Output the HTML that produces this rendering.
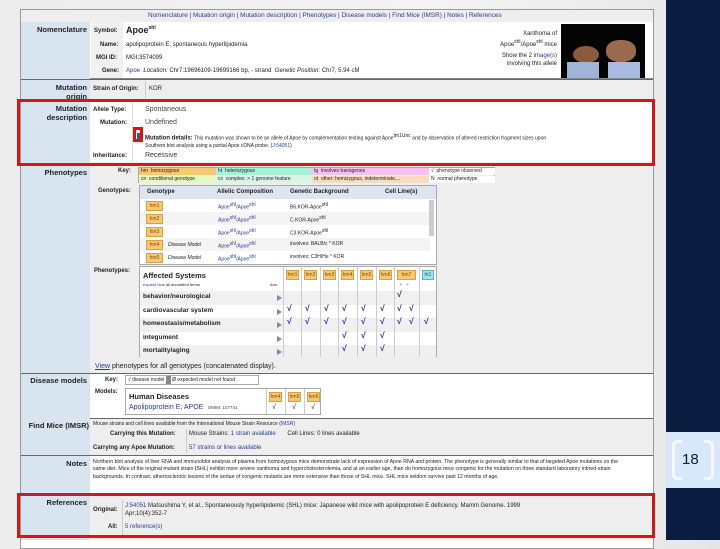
<!DOCTYPE html>
<html><head><meta charset="utf-8"><style>
*{margin:0;padding:0;box-sizing:border-box}
body{width:720px;height:540px;overflow:hidden;position:relative;font-family:"Liberation Sans",sans-serif;background:linear-gradient(90deg,#ececec,#f4f4f4 60%,#e6e6e6);color:#222}
.a{position:absolute;white-space:nowrap}
.lbl{position:absolute;left:21px;width:66px;text-align:right;font-weight:bold;font-size:7.5px;line-height:9px;color:#222}
.f7{font-size:7px}.f6{font-size:6px}.f5{font-size:5px}
.b{font-weight:bold}
.blue{color:#2a3a9a}
.hm{position:absolute;background:#f8c870;border:1px solid #d8a040;font-size:5px;color:#7a4a10;text-align:center;line-height:8px;height:10px}
.ck{position:absolute;color:#2a2aa0;font-size:8.5px;font-weight:bold}
.arr{position:absolute;width:0;height:0;border-left:5px solid #7a8aa8;border-top:3px solid transparent;border-bottom:3px solid transparent}
.rb{position:absolute;border:3px solid #d41818}
sup{font-size:5px}
</style></head><body>
<div class="a" style="left:666px;top:0;width:54px;height:540px;background:#0c1c40"></div>
<div class="a" style="left:666px;top:432px;width:54px;height:56px;background:#d6e8fa"></div>
<div class="a" style="left:672px;top:440px;width:10px;height:40px;border:3px solid #f4f8fc;border-right:none;border-radius:6px 0 0 6px"></div>
<div class="a" style="left:704px;top:440px;width:10px;height:40px;border:3px solid #f4f8fc;border-left:none;border-radius:0 6px 6px 0"></div>
<div class="a" style="left:682px;top:451px;font-size:15px;color:#0c1c40">18</div>

<div class="a" style="left:20px;top:9px;width:634px;height:540px;border:1px solid #999;background:#fff"></div>
<div class="a" style="left:21px;top:10px;width:632px;height:12px;background:#eee"></div>
<div class="a blue" style="left:148px;top:12px;font-size:6.4px">Nomenclature | Mutation origin | Mutation description | Phenotypes | Disease models | Find Mice (IMSR) | Notes | References</div>
<div class="a" style="left:21px;top:22px;width:69px;height:518px;background:#d8e4f0"></div>
<div class="a" style="left:90px;top:79px;width:563px;height:21px;background:#eee;border-top:1px solid #666"></div>
<div class="a" style="left:21px;top:79px;width:69px;height:1px;background:#666"></div>
<div class="a" style="left:90px;top:162px;width:563px;height:211px;background:#eee"></div>
<div class="a" style="left:21px;top:373px;width:632px;height:1px;background:#666"></div>
<div class="a" style="left:90px;top:418px;width:563px;height:37px;background:#eee;border-top:1px solid #666"></div>
<div class="a" style="left:21px;top:455px;width:632px;height:1px;background:#666"></div>
<div class="a" style="left:90px;top:495px;width:563px;height:45px;background:#eee;border-top:1px solid #666"></div>

<div class="lbl" style="top:25px">Nomenclature</div>
<div class="a" style="left:91px;top:22px;width:32px;height:57px;background:#f0f0f0"></div>
<div class="a f6 b" style="left:94px;top:28px">Symbol:</div>
<div class="a b" style="left:126px;top:25px;font-size:9px">Apoe<sup>shl</sup></div>
<div class="a f6 b" style="left:100px;top:42px">Name:</div>
<div class="a f6" style="left:126px;top:42px">apolipoprotein E; spontaneous hyperlipidemia</div>
<div class="a f6 b" style="left:96px;top:55px">MGI ID:</div>
<div class="a f6" style="left:126px;top:55px">MGI:3574099</div>
<div class="a f6 b" style="left:102px;top:68px">Gene:</div>
<div class="a f6" style="left:126px;top:68px"><span class="blue">Apoe</span> &nbsp;<i>Location:</i> Chr7:19696109-19699166 bp, - strand &nbsp;<i>Genetic Position:</i> Chr7, 5.94 cM</div>
<div class="a f6" style="left:480px;top:30px;width:77px;text-align:right;line-height:8px">Xanthoma of<br>Apoe<sup>shl</sup>/Apoe<sup>shl</sup> mice</div>
<div class="a f6" style="left:470px;top:52px;width:87px;text-align:right;line-height:8px">Show the 2 <span class="blue">image(s)</span><br>involving this allele</div>
<div class="a" style="left:561px;top:24px;width:84px;height:54px;background:#050505">
 <div class="a" style="left:12px;top:22px;width:26px;height:17px;background:#8a5a40;border-radius:50%"></div>
 <div class="a" style="left:45px;top:16px;width:30px;height:22px;background:#9a6a50;border-radius:45%"></div>
 <div class="a" style="left:6px;top:38px;width:32px;height:16px;background:#a0b4d8"></div>
 <div class="a" style="left:47px;top:38px;width:32px;height:16px;background:#a8bce0"></div>
</div>
<div class="a" style="left:90px;top:78px;width:563px;height:1px;background:#888"></div>

<div class="lbl" style="top:83px">Mutation<br>origin</div>
<div class="a f6 b" style="left:93px;top:86px">Strain of Origin:</div>
<div class="a" style="left:145px;top:81px;width:1px;height:17px;background:#ccc"></div>
<div class="a f6" style="left:149px;top:86px">KOR</div>

<div class="lbl" style="top:104px">Mutation<br>description</div>
<div class="a" style="left:132px;top:100px;width:1px;height:62px;background:#ddd"></div>
<div class="a f6 b" style="left:93px;top:107px">Allele Type:</div>
<div class="a f6 b" style="left:100px;top:120px">Mutation:</div>
<div class="a f6 b" style="left:93px;top:153px">Inheritance:</div>
<div class="a f7" style="left:145px;top:106px;color:#444">Spontaneous</div>
<div class="a f7" style="left:145px;top:119px;color:#444">Undefined</div>
<div class="a" style="left:137px;top:133px;width:5px;height:6px;background:#556"></div>
<div class="a f5" style="left:145px;top:133px;line-height:7px"><b style="font-size:6px">Mutation details:</b> This mutation was shown to be an allele of Apoe by complementation testing against Apoe<sup>tm1Unc</sup> and by observation of altered restriction fragment sizes upon<br>Southern blot analysis using a partial Apoe cDNA probe. (<span class="blue">J:54051</span>)</div>
<div class="a f7" style="left:145px;top:152px;color:#333">Recessive</div>

<div class="lbl" style="top:168px">Phenotypes</div>
<div class="a f6 b" style="left:118px;top:168px">Key:</div>
<div class="a f5" style="left:138px;top:167px;width:357px;height:16px;border:1px solid #aaa;line-height:7px">
 <div class="a" style="left:0;top:0;width:77px;height:7px;background:#f8c870;padding-left:2px">hm &nbsp;homozygous</div>
 <div class="a" style="left:77px;top:0;width:96px;height:7px;background:#a8f0d8;padding-left:2px">ht &nbsp;heterozygous</div>
 <div class="a" style="left:173px;top:0;width:117px;height:7px;background:#f8c0f0;padding-left:2px">tg &nbsp;involves transgenes</div>
 <div class="a" style="left:290px;top:0;width:66px;height:7px;background:#fff;padding-left:2px">√ &nbsp;phenotype observed</div>
 <div class="a" style="left:0;top:8px;width:77px;height:7px;background:#e4f8c0;padding-left:2px">cn &nbsp;conditional genotype</div>
 <div class="a" style="left:77px;top:8px;width:96px;height:7px;background:#d8f4e8;padding-left:2px">cx &nbsp;complex: &gt; 1 genome feature</div>
 <div class="a" style="left:173px;top:8px;width:117px;height:7px;background:#f8dcc0;padding-left:2px">ot &nbsp;other: hemizygous, indeterminate,...</div>
 <div class="a" style="left:290px;top:8px;width:66px;height:7px;background:#fff;padding-left:2px">N &nbsp;normal phenotype</div>
</div>
<div class="a f6 b" style="left:98px;top:188px">Genotypes:</div>
<div class="a" style="left:139px;top:185px;width:298px;height:80px;border:1px solid #aaa;background:#fff">
 <div class="a" style="left:0;top:0;width:296px;height:13px;background:#dde6f0"></div>
 <div class="a" style="left:0;top:26px;width:290px;height:13px;background:#f4f4f4"></div>
 <div class="a" style="left:0;top:52px;width:290px;height:13px;background:#f4f4f4"></div>
 <div class="a" style="left:289px;top:14px;width:5px;height:36px;background:#ccc"></div>
 <div class="a f6 b" style="left:7px;top:3px">Genotype</div>
 <div class="a f6 b" style="left:77px;top:3px">Allelic Composition</div>
 <div class="a f6 b" style="left:150px;top:3px">Genetic Background</div>
 <div class="a f6 b" style="left:245px;top:3px">Cell Line(s)</div>
 <div class="hm" style="left:6px;top:15px;width:17px">hm1</div>
 <div class="hm" style="left:6px;top:28px;width:17px">hm2</div>
 <div class="hm" style="left:6px;top:41px;width:17px">hm3</div>
 <div class="hm" style="left:6px;top:54px;width:17px">hm4</div>
 <div class="hm" style="left:6px;top:67px;width:17px">hm5</div>
 <div class="a f5" style="left:28px;top:56px;font-style:italic">Disease Model</div>
 <div class="a f5" style="left:28px;top:69px;font-style:italic">Disease Model</div>
 <div class="a f5 blue" style="left:78px;top:16px">Apoe<sup>shl</sup>/Apoe<sup>shl</sup></div>
 <div class="a f5 blue" style="left:78px;top:29px">Apoe<sup>shl</sup>/Apoe<sup>shl</sup></div>
 <div class="a f5 blue" style="left:78px;top:42px">Apoe<sup>shl</sup>/Apoe<sup>shl</sup></div>
 <div class="a f5 blue" style="left:78px;top:55px">Apoe<sup>shl</sup>/Apoe<sup>shl</sup></div>
 <div class="a f5 blue" style="left:78px;top:68px">Apoe<sup>shl</sup>/Apoe<sup>shl</sup></div>
 <div class="a f5" style="left:150px;top:16px">B6.KOR-Apoe<sup>shl</sup></div>
 <div class="a f5" style="left:150px;top:29px">C.KOR-Apoe<sup>shl</sup></div>
 <div class="a f5" style="left:150px;top:42px">C3.KOR-Apoe<sup>shl</sup></div>
 <div class="a f5" style="left:150px;top:55px">involves: BALB/c * KOR</div>
 <div class="a f5" style="left:150px;top:68px">involves: C3H/He * KOR</div>
</div>
<div class="a f6 b" style="left:94px;top:268px">Phenotypes:</div>
<div class="a" style="left:139px;top:266px;width:298px;height:91px;border:1px solid #aaa;background:#fff">
 <div class="a" style="left:0;top:24px;width:296px;height:14px;background:#f0f0f0"></div>
 <div class="a" style="left:0;top:51px;width:296px;height:14px;background:#f0f0f0"></div>
 <div class="a" style="left:0;top:78px;width:296px;height:12px;background:#f0f0f0"></div>
 <div class="a" style="left:143px;top:0;width:1px;height:90px;background:#ccc"></div>
 <div class="a" style="left:161px;top:0;width:1px;height:90px;background:#ccc"></div>
 <div class="a" style="left:180px;top:0;width:1px;height:90px;background:#ccc"></div>
 <div class="a" style="left:198px;top:0;width:1px;height:90px;background:#ccc"></div>
 <div class="a" style="left:217px;top:0;width:1px;height:90px;background:#ccc"></div>
 <div class="a" style="left:236px;top:0;width:1px;height:90px;background:#ccc"></div>
 <div class="a" style="left:254px;top:0;width:1px;height:90px;background:#ccc"></div>
 <div class="a" style="left:279px;top:0;width:1px;height:90px;background:#ccc"></div>
 <div class="a b" style="left:3px;top:4px;font-size:7.5px">Affected Systems</div>
 <div class="a" style="left:3px;top:15px;font-size:4px"><span class="blue">expand</span> <span class="blue">hide</span> all annotated terms</div>
 <div class="a" style="left:130px;top:15px;font-size:4px">Ann</div>
 <div class="a b" style="left:3px;top:26px;font-size:6.5px">behavior/neurological</div>
 <div class="a b" style="left:3px;top:40px;font-size:6.5px">cardiovascular system</div>
 <div class="a b" style="left:3px;top:53px;font-size:6.5px">homeostasis/metabolism</div>
 <div class="a b" style="left:3px;top:67px;font-size:6.5px">integument</div>
 <div class="a b" style="left:3px;top:80px;font-size:6.5px">mortality/aging</div>
 <div class="arr" style="left:137px;top:28px"></div>
 <div class="arr" style="left:137px;top:42px"></div>
 <div class="arr" style="left:137px;top:55px"></div>
 <div class="arr" style="left:137px;top:69px"></div>
 <div class="arr" style="left:137px;top:82px"></div>
 <div class="hm" style="left:146px;top:3px;width:13px">hm1</div>
 <div class="hm" style="left:164px;top:3px;width:13px">hm2</div>
 <div class="hm" style="left:183px;top:3px;width:13px">hm3</div>
 <div class="hm" style="left:201px;top:3px;width:13px">hm4</div>
 <div class="hm" style="left:220px;top:3px;width:13px">hm5</div>
 <div class="hm" style="left:239px;top:3px;width:13px">hm6</div>
 <div class="hm" style="left:257px;top:3px;width:19px">hm7</div>
 <div class="hm" style="left:282px;top:3px;width:12px;background:#90e8f8;border-color:#50b8d0">ht1</div>
 <div class="a f5" style="left:259px;top:15px">♀ &nbsp;♂</div>
</div>
<div class="ck" style="left:397px;top:289px">√</div>
<div class="ck" style="left:287px;top:303px">√</div><div class="ck" style="left:305px;top:303px">√</div><div class="ck" style="left:324px;top:303px">√</div><div class="ck" style="left:342px;top:303px">√</div><div class="ck" style="left:361px;top:303px">√</div><div class="ck" style="left:380px;top:303px">√</div><div class="ck" style="left:397px;top:303px">√</div><div class="ck" style="left:409px;top:303px">√</div>
<div class="ck" style="left:287px;top:316px">√</div><div class="ck" style="left:305px;top:316px">√</div><div class="ck" style="left:324px;top:316px">√</div><div class="ck" style="left:342px;top:316px">√</div><div class="ck" style="left:361px;top:316px">√</div><div class="ck" style="left:380px;top:316px">√</div><div class="ck" style="left:397px;top:316px">√</div><div class="ck" style="left:409px;top:316px">√</div><div class="ck" style="left:424px;top:316px">√</div>
<div class="ck" style="left:342px;top:330px">√</div><div class="ck" style="left:361px;top:330px">√</div><div class="ck" style="left:380px;top:330px">√</div>
<div class="ck" style="left:342px;top:343px">√</div><div class="ck" style="left:361px;top:343px">√</div><div class="ck" style="left:380px;top:343px">√</div>
<div class="a f7" style="left:95px;top:363px"><span class="blue" style="text-decoration:underline">View</span> phenotypes for all genotypes (concatenated display).</div>

<div class="lbl" style="top:376px">Disease models</div>
<div class="a f6 b" style="left:105px;top:377px">Key:</div>
<div class="a f5" style="left:125px;top:375px;width:134px;height:10px;border:1px solid #aaa;background:#fff;line-height:8px;padding-left:2px">√ disease model <span style="display:inline-block;width:5px;height:8px;background:#888;vertical-align:top"></span> Ø expected model not found</div>
<div class="a f6 b" style="left:95px;top:389px">Models:</div>
<div class="a" style="left:125px;top:388px;width:196px;height:27px;border:1px solid #aaa;background:#fff">
 <div class="a b" style="left:3px;top:3px;font-size:7.5px">Human Diseases</div>
 <div class="a f7 blue" style="left:3px;top:15px">Apolipoprotein E; APOE <span style="font-size:4.5px;color:#444">&nbsp; OMIM: 107741</span></div>
 <div class="a" style="left:140px;top:0;width:1px;height:26px;background:#ccc"></div>
 <div class="a" style="left:159px;top:0;width:1px;height:26px;background:#ccc"></div>
 <div class="a" style="left:178px;top:0;width:1px;height:26px;background:#ccc"></div>
 <div class="hm" style="left:143px;top:3px;width:13px">hm4</div>
 <div class="hm" style="left:162px;top:3px;width:13px">hm5</div>
 <div class="hm" style="left:181px;top:3px;width:13px">hm6</div>
 <div class="a f7" style="left:146px;top:15px">√</div><div class="a f7" style="left:166px;top:15px">√</div><div class="a f7" style="left:185px;top:15px">√</div>
</div>

<div class="lbl" style="top:421px;left:18px;width:71px">Find Mice (IMSR)</div>
<div class="a f5" style="left:93px;top:421px">Mouse strains and cell lines available from the International Mouse Strain Resource (<span class="blue">IMSR</span>)</div>
<div class="a f6 b" style="left:110px;top:431px">Carrying this Mutation:</div>
<div class="a" style="left:186px;top:429px;width:1px;height:24px;background:#ccc"></div>
<div class="a f6" style="left:189px;top:431px">Mouse Strains: <span class="blue">1 strain available</span> &nbsp; &nbsp; &nbsp; Cell Lines: 0 lines available</div>
<div class="a f6 b" style="left:93px;top:445px">Carrying any Apoe Mutation:</div>
<div class="a f6 blue" style="left:189px;top:445px">57 strains or lines available</div>

<div class="lbl" style="top:459px">Notes</div>
<div class="a" style="left:93px;top:459px;font-size:5.2px;line-height:7.3px;width:532px;white-space:normal">Northern blot analysis of liver RNA and immunoblot analysis of plasma from homozygous mice demonstrate lack of expression of Apoe RNA and protein. The phenotype is generally similar to that of targeted Apoe mutations on the same diet. Mice of the original mutant strain (SHL) exhibit more severe xanthoma and hypercholesterolemia, and at an earlier age, than do homozygous mice congenic for the mutation on three standard laboratory inbred-strain backgrounds. In contrast, atherosclerotic lesions of the aortae of congenic mutants are more extensive than those of SHL mice. SHL mice seldom survive past 12 months of age.</div>

<div class="lbl" style="top:498px">References</div>
<div class="a f6 b" style="left:93px;top:507px">Original:</div>
<div class="a" style="left:122px;top:500px;width:1px;height:35px;background:#ccc"></div>
<div class="a f6" style="left:125px;top:502px;line-height:8px"><span class="blue">J:54051</span> Matsushima Y, et al., Spontaneously hyperlipidemic (SHL) mice: Japanese wild mice with apolipoprotein E deficiency. Mamm Genome. 1999<br>Apr;10(4):352-7</div>
<div class="a f6 b" style="left:108px;top:524px">All:</div>
<div class="a f6 blue" style="left:125px;top:524px">5 reference(s)</div>

<div class="rb" style="left:17px;top:99px;width:638px;height:67px"></div>
<div class="rb" style="left:133px;top:127px;width:10px;height:15px"></div>
<div class="rb" style="left:17px;top:493px;width:638px;height:45px"></div>
</body></html>
